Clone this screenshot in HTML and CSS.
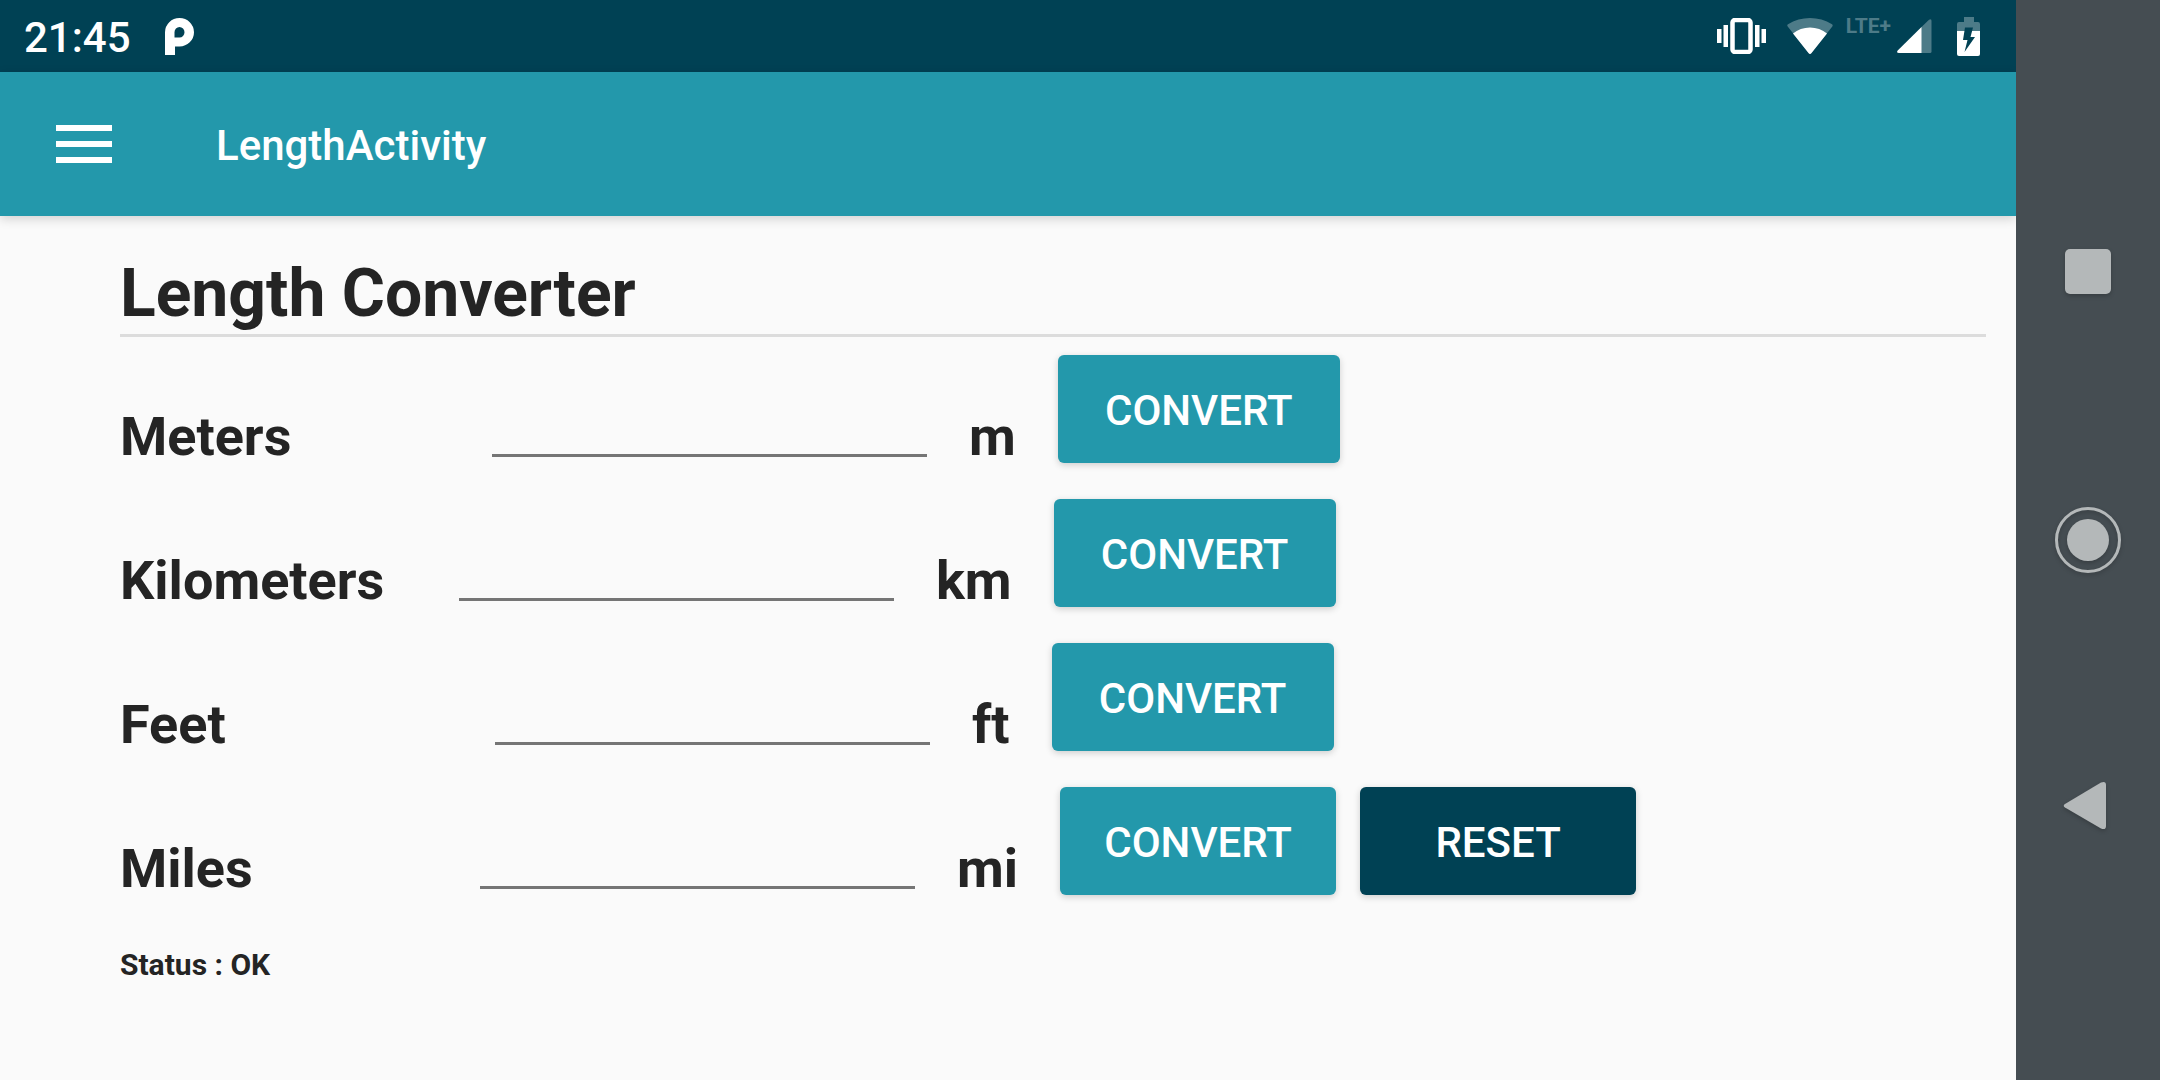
FILE: index.html
```html
<!DOCTYPE html>
<html lang="en">
<head>
<meta charset="utf-8">
<meta name="viewport" content="width=device-width, initial-scale=1">
<title>LengthActivity</title>
<link rel="stylesheet" href="styles.css">
</head>
<body>
<div class="screen">
  <div class="app">
    <div class="status-bar">
      <span class="clock">21:45</span>
      <svg class="notification" width="29" height="37" viewBox="0 0 29 37" aria-hidden="true">
        <path fill="#fff" fill-rule="evenodd" d="M0 37V14.200A14.500 14.200 0 1 1 14.500 28.400H10V37ZM9.500 19.500H14.500A5 5.200 0 1 0 9.500 14.300Z"/>
      </svg>
      <div class="indicators">
        <svg width="49" height="36" viewBox="0 0 49 36" aria-hidden="true">
          <rect x="15.500" y="2" width="18" height="32" rx="2.500" fill="none" stroke="#fff" stroke-width="4.500"/>
          <path fill="#fff" d="M0 11h4.500v14H0zM6.500 7h4.500v22H6.500zM38 7h4.500v22H38zM44.500 11H49v14h-4.500z"/>
        </svg>
        <svg class="wifi" width="46" height="36" viewBox="0 0 46 36" aria-hidden="true">
          <path fill="#4d7b88" d="M.7 8.500Q-.3 7.200 1 6.200C14-2 32-2 45 6.200Q46.200 7.200 45.300 8.500L24.500 35Q23 37 21.500 35Z"/>
          <path fill="#fff" d="M6 15.500C15 7.500 31 7.500 40 15.500L24.500 35Q23 37 21.500 35Z"/>
        </svg>
        <span class="network">LTE+</span>
        <svg class="signal" width="35" height="34" viewBox="0 0 35 34" aria-hidden="true">
          <path fill="#4d7b88" d="M24 8.500 32 .7Q34.500-.8 34.500 2V32.500Q34.500 34 33 34H24Z"/>
          <path fill="#fff" d="M24.500 8V34H2Q-1 34 .7 31.500Z"/>
        </svg>
        <svg class="battery" width="23" height="39" viewBox="0 0 23 39" aria-hidden="true">
          <path fill="#4d7b88" d="M7 0H17V5H21Q23 5 23 7V15H0V7Q0 5 2 5H7Z"/>
          <path fill="#fff" d="M0 14H23V37Q23 39 21 39H2Q0 39 0 37Z"/>
          <path fill="#004154" d="M8 10.500H16L13.500 20H18L7.500 35 10.500 23H6Z"/>
        </svg>
      </div>
    </div>
    <header class="app-bar">
      <button class="menu" type="button" aria-label="Open menu">
        <svg width="56" height="38" viewBox="0 0 56 38" aria-hidden="true"><path fill="#fff" d="M0 0h56v6H0zM0 16h56v6H0zM0 32h56v6H0z"/></svg>
      </button>
      <span class="app-title">LengthActivity</span>
    </header>
    <main class="content">
      <h1 class="heading">Length Converter</h1>
      <form class="rows">
        <div class="row">
          <label class="label label-meters" for="meters">Meters</label>
          <input class="field" id="meters" type="text" inputmode="decimal">
          <span class="unit">m</span>
          <button class="button" type="button">CONVERT</button>
        </div>
        <div class="row">
          <label class="label label-kilometers" for="kilometers">Kilometers</label>
          <input class="field" id="kilometers" type="text" inputmode="decimal">
          <span class="unit">km</span>
          <button class="button" type="button">CONVERT</button>
        </div>
        <div class="row">
          <label class="label label-feet" for="feet">Feet</label>
          <input class="field" id="feet" type="text" inputmode="decimal">
          <span class="unit">ft</span>
          <button class="button" type="button">CONVERT</button>
        </div>
        <div class="row">
          <label class="label label-miles" for="miles">Miles</label>
          <input class="field" id="miles" type="text" inputmode="decimal">
          <span class="unit">mi</span>
          <div class="actions">
            <button class="button button-compact" type="button">CONVERT</button>
            <button class="button button-compact button-dark" type="reset">RESET</button>
          </div>
        </div>
      </form>
      <p class="status">Status : OK</p>
    </main>
  </div>
  <nav class="nav-bar" aria-label="System navigation">
    <button class="nav-button" type="button" aria-label="Recent apps">
      <svg width="66" height="66" viewBox="0 0 66 66"><rect x="10" y="10" width="46" height="45" rx="5" fill="#b4b8b9"/></svg>
    </button>
    <button class="nav-button" type="button" aria-label="Home">
      <svg width="66" height="66" viewBox="0 0 66 66"><circle cx="33" cy="33" r="31.500" fill="none" stroke="#b4b8b9" stroke-width="3"/><circle cx="33" cy="33" r="21" fill="#b4b8b9"/></svg>
    </button>
    <button class="nav-button" type="button" aria-label="Back">
      <svg width="66" height="66" viewBox="0 0 66 66"><path fill="#b4b8b9" d="M10 29 46 7.500Q51 5.500 51 10V51Q51 55.500 46 53.500L10 32.500Q7.500 30.500 10 29Z"/></svg>
    </button>
  </nav>
</div>
</body>
</html>
```
FILE: styles.css
```css
* {
  box-sizing: border-box;
}

body {
  margin: 0;
  background: #fafafa;
  color: #242424;
  font-family: Roboto, sans-serif;
}

button {
  border: 0;
  padding: 0;
  font: inherit;
  color: inherit;
  background: none;
  cursor: pointer;
}

svg {
  display: block;
  flex: none;
}

.screen {
  display: flex;
  min-height: 100vh;
}

.app {
  flex: 1;
  min-width: 0;
}

.status-bar {
  display: flex;
  align-items: center;
  height: 72px;
  padding: 0 36px 0 24px;
  background: #004154;
  color: #fff;
}

.clock {
  padding-top: 4px;
  font-size: 42px;
  font-weight: 500;
  line-height: 48px;
}

.notification {
  margin-left: 34px;
}

.indicators {
  display: flex;
  align-items: center;
  margin-left: auto;
}

.wifi {
  margin-left: 21px;
}

.network {
  align-self: flex-start;
  margin-left: 13px;
  color: #4d7b88;
  font-size: 21px;
  font-weight: 700;
  line-height: 18px;
}

.signal {
  margin-left: 6px;
}

.battery {
  margin-left: 25px;
}

.app-bar {
  display: flex;
  align-items: center;
  gap: 104px;
  height: 144px;
  padding: 0 56px;
  background: #2398ab;
  color: #fff;
  box-shadow: 0 3px 10px rgba(0, 0, 0, 0.16);
}

.app-title {
  padding-top: 4px;
  font-size: 42px;
  font-weight: 500;
  line-height: 48px;
}

.content {
  padding: 38px 30px 38px 120px;
}

.heading {
  margin: 0 0 18px;
  border-bottom: 3px solid #dcdcdc;
  font-size: 66px;
  font-weight: 700;
  line-height: 80px;
}

.rows {
  display: flex;
  flex-direction: column;
  gap: 36px;
}

.row {
  display: flex;
  align-items: flex-end;
}

.label,
.unit {
  flex: none;
  font-size: 54px;
  font-weight: 700;
  line-height: 52px;
}

.label-meters {
  width: 372px;
}

.label-kilometers {
  width: 339px;
}

.label-feet {
  width: 375px;
}

.label-miles {
  width: 360px;
}

.field {
  width: 435px;
  height: 72px;
  margin: 0 42px 6px 0;
  padding: 0;
  border: 0;
  border-bottom: 3px solid #757575;
  outline: 0;
  background: none;
  color: inherit;
  font: 54px Roboto, sans-serif;
}

.unit {
  margin-right: 42px;
}

.actions {
  display: flex;
  gap: 24px;
}

.button {
  width: 282px;
  height: 108px;
  border-radius: 6px;
  background: #2398ab;
  color: #fff;
  font-size: 42px;
  font-weight: 500;
  line-height: 48px;
  padding-top: 4px;
  box-shadow: 0 2px 7px rgba(0, 0, 0, 0.18);
}

.button-compact {
  width: 276px;
}

.button-dark {
  background: #004154;
}

.status {
  margin: 52px 0 0;
  font-size: 30px;
  font-weight: 700;
  line-height: 36px;
}

.nav-bar {
  display: flex;
  flex-direction: column;
  flex: none;
  width: 144px;
  padding: 138px 0;
  background: #454d52;
}

.nav-button {
  display: flex;
  flex: 1;
  align-items: center;
  justify-content: center;
}

.nav-button svg {
  filter: drop-shadow(0 2px 2px rgba(0, 0, 0, 0.2));
}
```
